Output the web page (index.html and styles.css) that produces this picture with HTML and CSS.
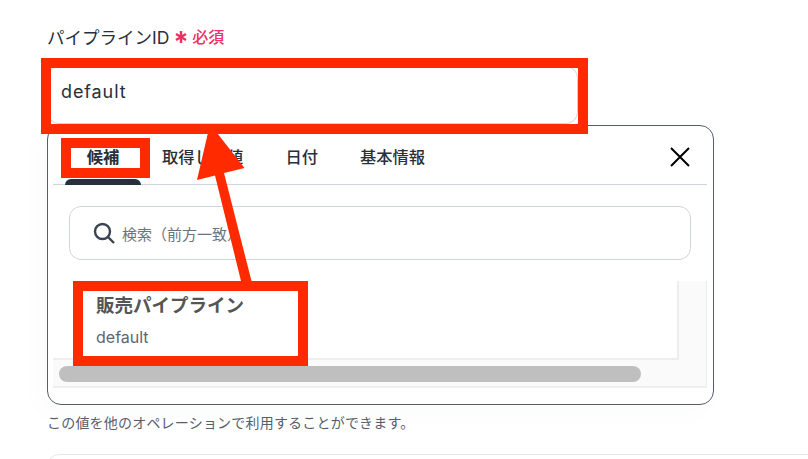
FILE: index.html
```html
<!DOCTYPE html>
<html lang="ja">
  <head>
    <meta name="viewport" content="width=device-width, initial-scale=1" />
    <title>パイプラインID</title>
    <link rel="stylesheet" href="styles.css">
  </head>
  <body>
    <div class="page">
      <div class="field-label">
        <span>パイプラインID</span>
        <svg class="required-mark" width="14" height="14" viewBox="0 0 14 14">
          <path d="M7 1v12M2 4l10 6M12 4L2 10" />
        </svg>
        <span class="required-text">必須</span>
      </div>

      <div class="text-input">default</div>

      <div class="popover">
        <div class="tabs">
          <div class="tab active">候補</div>
          <div class="tab">取得した値</div>
          <div class="tab">日付</div>
          <div class="tab">基本情報</div>
          <svg class="close-icon" width="20" height="20" viewBox="0 0 20 20">
            <path d="M1 1l18 18M19 1L1 19" />
          </svg>
        </div>

        <div class="search">
          <svg class="search-icon" width="22" height="22" viewBox="0 0 22 22">
            <circle cx="9.5" cy="9.5" r="7.5" />
            <path d="M15 15l6 6" />
          </svg>
          <span>検索（前方一致）</span>
        </div>

        <div class="list-scroll">
          <div class="list-row">
            <div class="list-items">
              <div class="item-title">販売パイプライン</div>
              <div class="item-value">default</div>
            </div>
            <div class="track-vertical"></div>
          </div>
          <div class="track-horizontal">
            <div class="thumb"></div>
          </div>
        </div>
      </div>

      <p class="hint">この値を他のオペレーションで利用することができます。</p>

      <div class="next-field"></div>

      <!-- 赤枠と矢印の注釈 -->
      <div class="mark mark-input"></div>
      <div class="mark mark-tab"></div>
      <div class="mark mark-item"></div>
      <svg class="arrow" width="808" height="459" viewBox="0 0 808 459">
        <path d="M210 124L244.500 168L224 173L251.500 281L241.500 283L215 175.500L197 180Z" />
      </svg>
    </div>
  </body>
</html>
```

FILE: styles.css
```css
* {
  box-sizing: border-box;
}

body {
  margin: 0;
  background: #fff;
  color: #27303a;
  font-family: Inter, "Noto Sans CJK JP", sans-serif;
}

.page {
  position: relative;
  width: 808px;
  height: 459px;
  padding: 26px 0 0 47px;
  overflow: hidden;
}

/* ラベル */
.field-label {
  display: flex;
  align-items: center;
  height: 20px;
  font-size: 17.500px;
}

.required-mark {
  margin-left: 5px;
  margin-top: 2px;
  fill: none;
  stroke: #ef2f62;
  stroke-width: 2.400;
}

.required-text {
  margin-left: 4px;
  color: #ef2f62;
  font-size: 16px;
  font-weight: 500;
}

/* 入力欄 */
.text-input {
  width: 531px;
  height: 58px;
  margin-top: 20px;
  padding: 0 13px;
  border: 1px solid #d0d5dd;
  border-radius: 12px;
  font-size: 18px;
  line-height: 50px;
  letter-spacing: 0.9px;
}

/* ポップオーバー */
.popover {
  width: 667px;
  height: 280px;
  margin-top: 1px;
  padding: 0 6px 0 5px;
  background: #fff;
  border: 1px solid #555e6b;
  border-radius: 14px;
  box-shadow: -8px 8px 30px rgba(39, 48, 58, 0.02);
}

.tabs {
  display: flex;
  align-items: center;
  height: 59px;
  padding-left: 12px;
  border-bottom: 1px solid #d0d5dd;
}

.tab {
  position: relative;
  padding: 4px 21px 0;
  font-size: 16.300px;
  font-weight: 500;
  line-height: 55px;
}

.tab.active {
  padding: 4px 21.700px 0;
  font-weight: 700;
}

.tab.active::after {
  content: "";
  position: absolute;
  left: 0;
  right: 0;
  bottom: 0;
  height: 6px;
  background: #27303a;
  border-radius: 6px 6px 0 0;
}

.close-icon {
  margin-left: auto;
  margin-right: 17px;
  margin-top: 4px;
  fill: none;
  stroke: #000;
  stroke-width: 2;
}

/* 検索 */
.search {
  display: flex;
  align-items: center;
  gap: 7px;
  height: 54px;
  margin: 21px 16px 0;
  padding-left: 23px;
  border: 1px solid #d0d5dd;
  border-radius: 12px;
  color: #6b7280;
  font-size: 15px;
}

.search-icon {
  fill: none;
  stroke: #3a4350;
  stroke-width: 2.400;
}

/* 候補リスト */
.list-scroll {
  height: 107px;
  margin-top: 21px;
  border-right: 1px solid #eee;
  border-bottom: 2px solid #eee;
}

.list-row {
  display: flex;
  height: 79px;
}

.list-items {
  flex: 1;
  padding: 12px 0 0 43px;
  border-right: 2px solid #eee;
  border-bottom: 2px solid #eee;
}

.item-title {
  color: #555;
  font-size: 18.500px;
  font-weight: 700;
  line-height: 24px;
}

.item-value {
  margin-top: 8px;
  color: #5b6675;
  font-size: 16px;
  line-height: 24px;
}

.track-vertical {
  width: 27px;
  background: #fafafa;
}

.track-horizontal {
  height: 26px;
  padding: 6px 0 0 6px;
  background: #fafafa;
}

.thumb {
  width: 582px;
  height: 16px;
  background: #bfbfbf;
  border-radius: 8px;
}

.hint {
  margin: 8px 0 0;
  color: #555e6b;
  font-size: 14px;
  line-height: 20px;
  letter-spacing: 0.2px;
}

.next-field {
  width: 800px;
  height: 60px;
  margin-top: 21px;
  border: 1px solid #e5e7eb;
  border-radius: 12px;
}

/* 注釈 */
.mark {
  position: absolute;
  border: 10px solid #ff2a00;
}

.mark-input {
  left: 41px;
  top: 58px;
  width: 547px;
  height: 76px;
}

.mark-tab {
  left: 61px;
  top: 138px;
  width: 89px;
  height: 40px;
}

.mark-item {
  left: 73px;
  top: 281px;
  width: 235px;
  height: 85px;
}

.arrow {
  position: absolute;
  left: 0;
  top: 0;
  fill: #ff2a00;
}
```
